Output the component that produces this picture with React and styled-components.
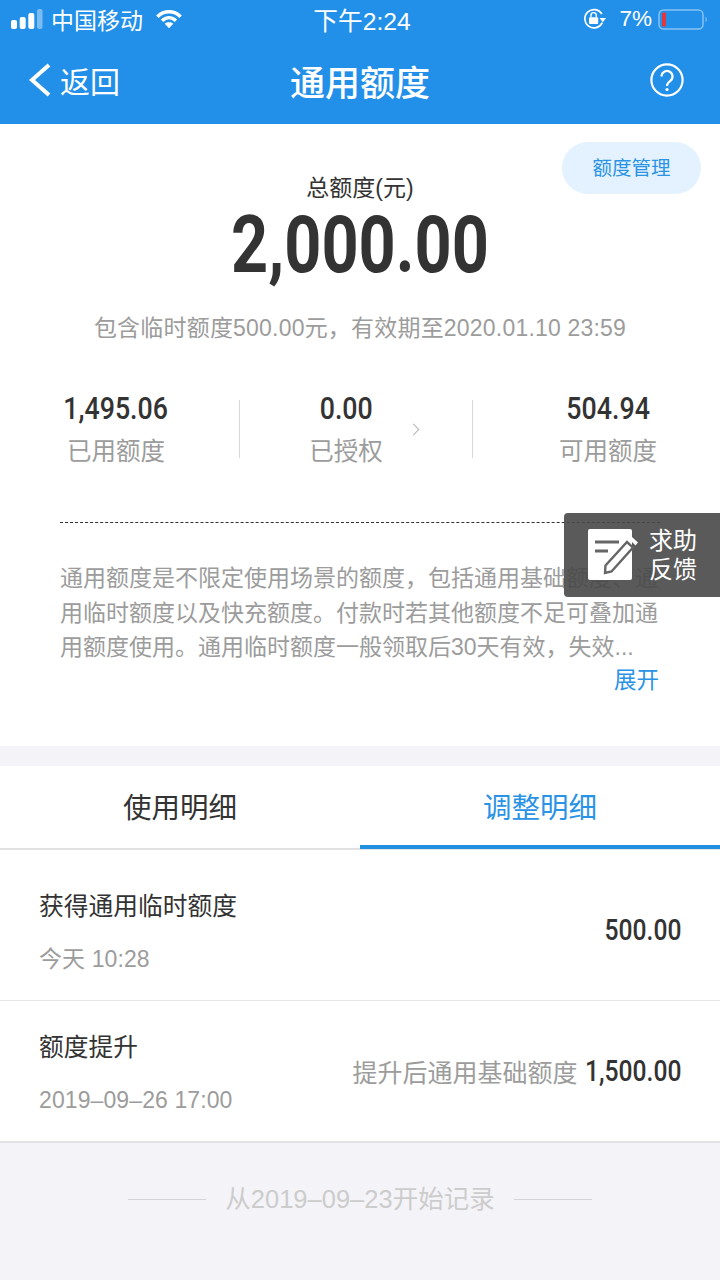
import React from 'react';
import styled, { createGlobalStyle } from 'styled-components';

const CJK = `"Liberation Sans", "Noto Sans CJK SC", sans-serif`;
const DIN = `"Roboto", "Noto Sans CJK SC", sans-serif`;

const GlobalStyle = createGlobalStyle`
  html, body { margin: 0; padding: 0; background: #f4f4f8; }
  body { font-family: ${CJK}; }
  * { box-sizing: border-box; }
`;

const Page = styled.div`
  width: 720px;
  height: 1280px;
  overflow: hidden;
  position: relative;
  background: #f4f4f8;
`;

const Header = styled.header`
  height: 124px;
  background: #2290e8;
  color: #fff;
`;

const StatusBar = styled.div`
  height: 40px;
  display: grid;
  grid-template-columns: 1fr auto 1fr;
  align-items: center;
  padding: 0 11px 2px 11px;
`;

const StatusLeft = styled.div`
  display: flex;
  align-items: center;
  gap: 7px;
`;

const StatusRight = styled.div`
  display: flex;
  align-items: center;
  justify-content: flex-end;
  gap: 6px;
`;

const Carrier = styled.span`
  font-size: 23px;
  margin-right: 6px;
`;

const Clock = styled.span`
  font-size: 24.7px;
  margin-left: 4px;
`;

const Percent = styled.span`
  font-size: 22.5px;
  margin-left: 6px;
`;

const NavBar = styled.div`
  height: 84px;
  display: grid;
  grid-template-columns: 1fr auto 1fr;
  align-items: center;
  padding: 0 28px 4px 28px;
`;

const BackLink = styled.div`
  display: flex;
  align-items: center;
  gap: 8px;
  font-size: 30px;
`;

const NavTitle = styled.h1`
  margin: 0;
  font-size: 35px;
  font-weight: 500;
`;

const HelpSlot = styled.div`
  display: flex;
  justify-content: flex-end;
  padding-right: 8px;
`;

const Summary = styled.section`
  height: 622px;
  background: #fff;
  position: relative;
  padding-top: 50px;
`;

const ManageButton = styled.div`
  position: absolute;
  top: 18px;
  right: 19px;
  width: 139px;
  height: 52px;
  padding-bottom: 3px;
  border-radius: 26px;
  background: #e3f2fe;
  color: #2a93e6;
  font-size: 19.5px;
  display: flex;
  align-items: center;
  justify-content: center;
`;

const TotalLabel = styled.div`
  text-align: center;
  font-size: 23px;
  line-height: 28px;
  color: #333;
`;

const TotalValue = styled.div`
  text-align: center;
  font-family: ${DIN};
  font-weight: 700;
  font-size: 80px;
  line-height: 84px;
  margin-top: 1px;
  color: #333;
  transform: scaleX(0.81);
`;

const TotalNote = styled.div`
  text-align: center;
  font-size: 23px;
  letter-spacing: 0.2px;
  line-height: 30px;
  margin-top: 26px;
  color: #9c9c9c;
`;

const Stats = styled.div`
  display: grid;
  grid-template-columns: 179px 233px 192px;
  grid-template-rows: 58px;
  margin: 57px 0 0 60px;
  width: 604px;
`;

const Stat = styled.div`
  position: relative;
  display: flex;
  flex-direction: column;
  justify-content: center;
  align-items: ${(p) => p.$align};
  padding-right: ${(p) => p.$inset || 0}px;
  & + & {
    border-left: 1px solid #d8d8d8;
  }
`;

const StatBody = styled.div`
  width: 112px;
  margin-top: 2px;
  display: flex;
  flex-direction: column;
  align-items: center;
`;

const StatValue = styled.div`
  font-family: ${DIN};
  font-weight: 500;
  font-size: 31.5px;
  line-height: 38px;
  color: #333;
  transform: scaleX(0.85);
  white-space: nowrap;
`;

const StatLabel = styled.div`
  font-size: 24.5px;
  line-height: 36px;
  margin-top: 6px;
  color: #9c9c9c;
  white-space: nowrap;
`;

const Chevron = styled.span`
  position: absolute;
  right: 52px;
  top: 23px;
  display: flex;
`;

const Dashed = styled.div`
  margin: 64px 60px 0;
  border-top: 1px dashed #333;
`;

const Description = styled.p`
  margin: 38px 60px 0;
  font-size: 23px;
  line-height: 34.5px;
  color: #9c9c9c;
  height: 104px;
  overflow: hidden;
`;

const Expand = styled.div`
  margin: 1px 61px 0 0;
  text-align: right;
  font-size: 22.5px;
  line-height: 30px;
  color: #2a93e6;
`;

const Feedback = styled.div`
  position: absolute;
  top: 389px;
  right: 0;
  width: 156px;
  height: 84px;
  border-radius: 4px 0 0 4px;
  background: rgba(72, 72, 72, 0.9);
  display: flex;
  align-items: center;
  padding-left: 24px;
  gap: 9px;
`;

const FeedbackText = styled.div`
  color: #fff;
  font-size: 24px;
  line-height: 29px;
  width: 50px;
`;

const Tabs = styled.div`
  margin-top: 20px;
  height: 84px;
  background: #fff;
  display: grid;
  grid-template-columns: 1fr 1fr;
  border-bottom: 2px solid #e2e2e2;
`;

const Tab = styled.div`
  display: flex;
  align-items: center;
  justify-content: center;
  font-size: 28.5px;
  color: ${(p) => (p.$active ? '#2a93e6' : '#333')};
  border-bottom: ${(p) => (p.$active ? '4px solid #2290e0' : 'none')};
  margin-bottom: ${(p) => (p.$active ? '-1px' : '0')};
  padding-bottom: ${(p) => (p.$active ? '0' : '4px')};
`;

const List = styled.div`
  background: #fff;
  border-bottom: 2px solid #e2e2e2;
`;

const Row = styled.div`
  height: ${(p) => p.$height}px;
  display: flex;
  align-items: center;
  justify-content: space-between;
  padding: ${(p) => p.$top}px 39px 0;
  & + & {
    border-top: 1px solid #e6e6e6;
  }
`;

const RowText = styled.div`
  margin-top: 4px;
`;

const RowTitle = styled.div`
  font-size: 24.75px;
  line-height: 36px;
  color: #333;
`;

const RowTime = styled.div`
  font-size: 23px;
  letter-spacing: 0.1px;
  line-height: 32px;
  margin-top: 18px;
  color: #9c9c9c;
`;

const RowRight = styled.div`
  display: flex;
  align-items: center;
`;

const RowHint = styled.span`
  font-size: 25px;
  color: #9c9c9c;
  margin-right: -10px;
`;

const RowAmount = styled.span`
  font-family: ${DIN};
  font-weight: 500;
  font-size: 29px;
  color: #333;
  transform: scaleX(0.85);
  transform-origin: right center;
`;

const Footer = styled.div`
  display: flex;
  align-items: center;
  justify-content: center;
  gap: 19px;
  margin-top: 38px;
  color: #ccc;
  font-size: 25.5px;
  line-height: 36px;
`;

const FooterRule = styled.span`
  width: 78px;
  height: 1px;
  background: #d4d4d8;
`;

const SignalBars = () => (
  <svg width="33" height="20" viewBox="0 0 33 20">
    <rect x="0" y="11" width="6" height="9" rx="2" fill="#fff" />
    <rect x="8.7" y="8" width="6" height="12" rx="2" fill="#fff" />
    <rect x="17.3" y="4" width="6" height="16" rx="2" fill="#fff" />
    <rect x="26" y="0" width="5.5" height="20" rx="2" fill="#fff" opacity="0.4" />
  </svg>
);

const WifiIcon = () => (
  <svg width="26" height="20" viewBox="0 0 28 20" fill="none" stroke="#fff" strokeWidth="3.8">
    <path d="M1.5 7.5 C 8.5 .5, 19.5 .5, 26.5 7.5" />
    <path d="M6.5 12 C 11 7.5, 17 7.5, 21.5 12" />
    <path d="M14 20 L9.4 15 C 12 13, 16 13, 18.6 15 Z" fill="#fff" stroke="none" />
  </svg>
);

const RotationLock = () => (
  <svg width="24" height="22" viewBox="0 0 26 24" fill="none">
    <path d="M20.5 6.5 A10 10 0 1 0 21 16" stroke="#fff" strokeWidth="1.8" />
    <path d="M18 11 L25 11 L21.5 15.5 Z" fill="#fff" />
    <rect x="6.5" y="10" width="10" height="7.5" rx="1.2" fill="#fff" />
    <path d="M8.6 10 V8 a2.9 2.9 0 0 1 5.8 0 V10" stroke="#fff" strokeWidth="1.5" />
  </svg>
);

const BatteryIcon = () => (
  <svg width="51" height="21" viewBox="0 0 51 21" fill="none">
    <rect x="1" y="1" width="44" height="19" rx="4.5" stroke="#fff" strokeOpacity="0.45" strokeWidth="1.5" />
    <rect x="4" y="3.5" width="4" height="14" rx="1" fill="#e0383e" />
    <path d="M47.5 7.5 a4.5 4.5 0 0 1 0 6 Z" fill="#fff" fillOpacity="0.45" />
  </svg>
);

const BackArrow = () => (
  <svg width="24" height="34" viewBox="0 0 24 34" fill="none" stroke="#fff" strokeWidth="4">
    <path d="M21 2 L4 17 L21 32" />
  </svg>
);

const HelpIcon = () => (
  <svg width="34" height="34" viewBox="0 0 34 34" fill="none" stroke="#fff" strokeWidth="2.2">
    <circle cx="17" cy="17" r="15.6" />
    <path d="M11.5 13.5 a5.5 5.5 0 1 1 8.8 4.4 c-2.2 1.7 -3.3 2.6 -3.3 5" />
    <circle cx="17" cy="26.5" r="1.6" fill="#fff" stroke="none" />
  </svg>
);

const SmallChevron = () => (
  <svg width="8" height="13" viewBox="0 0 8 14" fill="none" stroke="#bbb" strokeWidth="1.2">
    <path d="M1 1 L7 7 L1 13" />
  </svg>
);

// white note card with a pencil leaning over its right edge
const NoteIcon = () => (
  <svg width="52" height="52" viewBox="0 0 52 52">
    <rect x="0" y="0" width="44" height="51" rx="2" fill="#fff" />
    <path d="M7 13 H31 M7 22 H20" stroke="#666" strokeWidth="3" />
    <path d="M17 44 L17.5 36.5 L39 13 L45 18.5 L23.5 42.5 Z" fill="#fff" stroke="#666" strokeWidth="2.4" />
    <path d="M41.5 10.5 L44 8 L50 13.5 L47.5 16.5 Z" fill="#fff" />
  </svg>
);

export default function App() {
  return (
    <Page>
      <GlobalStyle />
      <Header>
        <StatusBar>
          <StatusLeft>
            <SignalBars />
            <Carrier>中国移动</Carrier>
            <WifiIcon />
          </StatusLeft>
          <Clock>下午2:24</Clock>
          <StatusRight>
            <RotationLock />
            <Percent>7%</Percent>
            <BatteryIcon />
          </StatusRight>
        </StatusBar>
        <NavBar>
          <BackLink>
            <BackArrow />
            返回
          </BackLink>
          <NavTitle>通用额度</NavTitle>
          <HelpSlot>
            <HelpIcon />
          </HelpSlot>
        </NavBar>
      </Header>

      <Summary>
        <ManageButton>额度管理</ManageButton>
        <TotalLabel>总额度(元)</TotalLabel>
        <TotalValue>2,000.00</TotalValue>
        <TotalNote>包含临时额度500.00元，有效期至2020.01.10 23:59</TotalNote>
        <Stats>
          <Stat $align="flex-start">
            <StatBody>
              <StatValue>1,495.06</StatValue>
              <StatLabel>已用额度</StatLabel>
            </StatBody>
          </Stat>
          <Stat $align="center" $inset={20}>
            <StatBody>
              <StatValue>0.00</StatValue>
              <StatLabel>已授权</StatLabel>
            </StatBody>
            <Chevron>
              <SmallChevron />
            </Chevron>
          </Stat>
          <Stat $align="flex-end">
            <StatBody>
              <StatValue>504.94</StatValue>
              <StatLabel>可用额度</StatLabel>
            </StatBody>
          </Stat>
        </Stats>
        <Dashed />
        <Description>
          通用额度是不限定使用场景的额度，包括通用基础额度、通用临时额度以及快充额度。付款时若其他额度不足可叠加通用额度使用。通用临时额度一般领取后30天有效，失效...
        </Description>
        <Expand>展开</Expand>
        <Feedback>
          <NoteIcon />
          <FeedbackText>求助反馈</FeedbackText>
        </Feedback>
      </Summary>

      <Tabs>
        <Tab>使用明细</Tab>
        <Tab $active>调整明细</Tab>
      </Tabs>
      <List>
        <Row $height={150} $top={10}>
          <RowText>
            <RowTitle>获得通用临时额度</RowTitle>
            <RowTime>今天 10:28</RowTime>
          </RowText>
          <RowRight>
            <RowAmount>500.00</RowAmount>
          </RowRight>
        </Row>
        <Row $height={141} $top={0}>
          <RowText>
            <RowTitle>额度提升</RowTitle>
            <RowTime>2019–09–26 17:00</RowTime>
          </RowText>
          <RowRight>
            <RowHint>提升后通用基础额度</RowHint>
            <RowAmount>1,500.00</RowAmount>
          </RowRight>
        </Row>
      </List>
      <Footer>
        <FooterRule />
        <span>从2019–09–23开始记录</span>
        <FooterRule />
      </Footer>
    </Page>
  );
}
